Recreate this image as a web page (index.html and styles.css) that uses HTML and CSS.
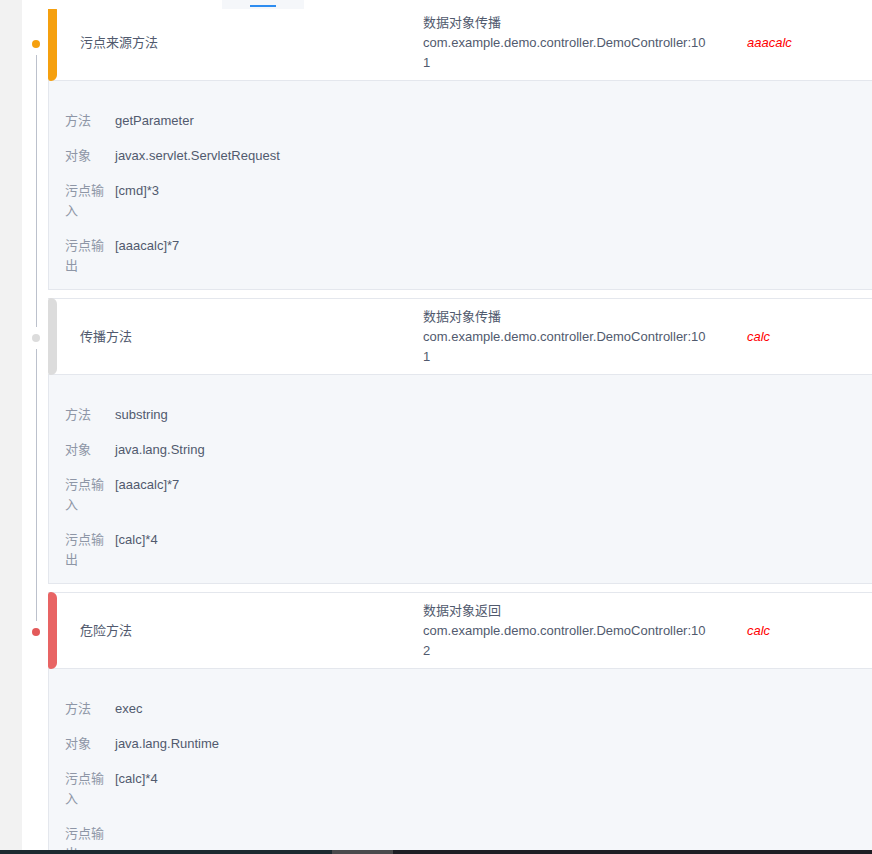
FILE: index.html
```html
<!DOCTYPE html>
<html lang="zh-CN">
<head>
<meta charset="utf-8">
<title>污点链路</title>
<link rel="stylesheet" href="styles.css">
</head>
<body>
<div class="topbar"><div class="tab"><span class="tab-ink"></span></div></div>
<div class="page">
  <div class="side"></div>
  <div class="main">
    <div class="item">
      <div class="tl"><span class="dot dot-orange"></span><span class="line"></span></div>
      <div class="card">
        <div class="head">
          <span class="bar bar-orange"></span>
          <div class="title">污点来源方法</div>
          <div class="mid">数据对象传播<br>com.example.demo.controller.DemoController:101</div>
          <div class="red">aaacalc</div>
        </div>
        <div class="body">
          <div class="row"><div class="lbl">方法</div><div class="val">getParameter</div></div>
          <div class="row"><div class="lbl">对象</div><div class="val">javax.servlet.ServletRequest</div></div>
          <div class="row"><div class="lbl">污点输入</div><div class="val">[cmd]*3</div></div>
          <div class="row"><div class="lbl">污点输出</div><div class="val">[aaacalc]*7</div></div>
        </div>
      </div>
    </div>
    <div class="item">
      <div class="tl"><span class="dot dot-gray"></span><span class="line"></span></div>
      <div class="card">
        <div class="head">
          <span class="bar bar-gray"></span>
          <div class="title">传播方法</div>
          <div class="mid">数据对象传播<br>com.example.demo.controller.DemoController:101</div>
          <div class="red">calc</div>
        </div>
        <div class="body">
          <div class="row"><div class="lbl">方法</div><div class="val">substring</div></div>
          <div class="row"><div class="lbl">对象</div><div class="val">java.lang.String</div></div>
          <div class="row"><div class="lbl">污点输入</div><div class="val">[aaacalc]*7</div></div>
          <div class="row"><div class="lbl">污点输出</div><div class="val">[calc]*4</div></div>
        </div>
      </div>
    </div>
    <div class="item">
      <div class="tl"><span class="dot dot-red"></span></div>
      <div class="card">
        <div class="head">
          <span class="bar bar-red"></span>
          <div class="title">危险方法</div>
          <div class="mid">数据对象返回<br>com.example.demo.controller.DemoController:102</div>
          <div class="red">calc</div>
        </div>
        <div class="body">
          <div class="row"><div class="lbl">方法</div><div class="val">exec</div></div>
          <div class="row"><div class="lbl">对象</div><div class="val">java.lang.Runtime</div></div>
          <div class="row"><div class="lbl">污点输入</div><div class="val">[calc]*4</div></div>
          <div class="row"><div class="lbl">污点输出</div><div class="val"></div></div>
        </div>
      </div>
    </div>
  </div>
</div>
<div class="scrollbar"><span class="sb-left"></span><span class="sb-thumb"></span><span class="sb-right"></span></div>
</body>
</html>
```

FILE: styles.css
```css
html, body {
  margin: 0;
  padding: 0;
  background: #ffffff;
  overflow: hidden;
}
body {
  font-family: "Liberation Sans", "Noto Sans CJK SC", Arial, sans-serif;
  font-size: 13px;
  color: #515a6e;
}
.topbar {
  position: fixed;
  top: 0;
  left: 22px;
  right: 0;
  height: 9px;
  background: #ffffff;
  z-index: 5;
}
.tab {
  position: absolute;
  left: 200px;
  top: 0;
  width: 82px;
  height: 9px;
  background: #f5f7fa;
}
.tab-ink {
  position: absolute;
  left: 28px;
  top: 5px;
  width: 26px;
  height: 2px;
  background: #2d8cf0;
}
.page {
  display: flex;
  width: 920px;
  min-height: 900px;
}
.side {
  width: 22px;
  flex: none;
  background: #f2f2f2;
}
.main {
  flex: 1;
  padding-top: 4px;
}
.item {
  display: flex;
  margin-bottom: 8px;
}
.tl {
  width: 26px;
  flex: none;
  display: flex;
  flex-direction: column;
  align-items: flex-start;
  padding-left: 10px;
  box-sizing: border-box;
}
.dot {
  width: 8px;
  height: 8px;
  border-radius: 50%;
  margin-top: 36px;
  flex: none;
}
.dot-orange { background: #f5a00f; }
.dot-gray { background: #dcdcdc; }
.dot-red { background: #e35a5a; }
.line {
  flex: 1;
  width: 1px;
  margin-left: 4px;
  margin-top: 7px;
  margin-bottom: -37px;
  background: #bcc1cc;
}
.card {
  flex: 1;
  min-width: 0;
}
.head {
  display: flex;
  align-items: center;
  height: 77px;
  box-sizing: border-box;
  border: 1px solid #e4e7ed;
  border-left: 0;
  background: #ffffff;
}
.bar {
  align-self: stretch;
  width: 9px;
  flex: none;
  margin: -1px 0;
  border-radius: 3px 6px 6px 3px;
}
.bar-orange { background: #f5a00f; }
.bar-gray { background: #dcdcdc; }
.bar-red { background: #e86464; }
.title {
  margin-left: 23px;
  width: 343px;
  flex: none;
  line-height: 20px;
  color: #515a6e;
}
.mid {
  width: 287px;
  flex: none;
  line-height: 20px;
  color: #515a6e;
  word-break: break-all;
}
.red {
  margin-left: 37px;
  color: #ff0000;
  font-style: italic;
  line-height: 20px;
}
.body {
  border: 1px solid #e4e7ed;
  border-top: 0;
  background: #f5f7fa;
  padding: 30px 16px 13px;
}
.row {
  display: flex;
  line-height: 20px;
  margin-bottom: 15px;
}
.row:last-child {
  margin-bottom: 0;
}
.lbl {
  width: 40px;
  flex: none;
  margin-right: 10px;
  color: #8e96a6;
}
.val {
  color: #515a6e;
}
.scrollbar {
  position: fixed;
  left: 0;
  right: 0;
  bottom: 0;
  height: 4px;
  display: flex;
  z-index: 6;
}
.sb-left {
  width: 332px;
  background: #1c2a30;
}
.sb-thumb {
  width: 61px;
  background: #4a4a4c;
}
.sb-right {
  flex: 1;
  background: #1e1e24;
}
```
